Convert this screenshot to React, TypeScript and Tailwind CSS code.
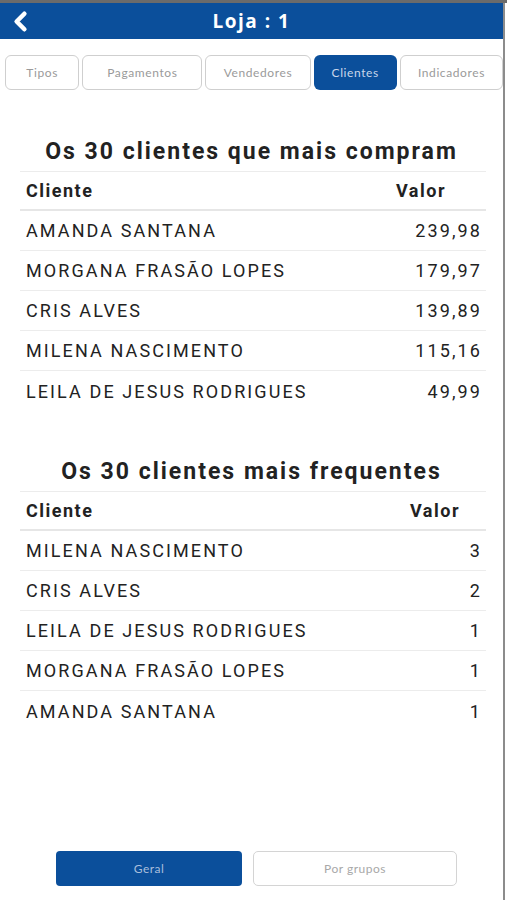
import { ChevronLeft } from "lucide-react"

const blue = "bg-[#0b4f9b]"

const tabs = ["Tipos", "Pagamentos", "Vendedores", "Clientes", "Indicadores"]
const tabWidths = ["w-[75px]", "w-[121px]", "w-[106px]", "w-[84px]", "w-[104px]"]

const topBuyers = [
  { name: "AMANDA SANTANA", value: "239,98" },
  { name: "MORGANA FRASÃO LOPES", value: "179,97" },
  { name: "CRIS ALVES", value: "139,89" },
  { name: "MILENA NASCIMENTO", value: "115,16" },
  { name: "LEILA DE JESUS RODRIGUES", value: "49,99" },
]

const frequent = [
  { name: "MILENA NASCIMENTO", value: "3" },
  { name: "CRIS ALVES", value: "2" },
  { name: "LEILA DE JESUS RODRIGUES", value: "1" },
  { name: "MORGANA FRASÃO LOPES", value: "1" },
  { name: "AMANDA SANTANA", value: "1" },
]

function RankTable({
  title,
  rows,
  headerPad,
}: {
  title: string
  rows: { name: string; value: string }[]
  headerPad: string
}) {
  return (
    <section className="flex flex-col">
      <h2 className="text-center text-[23px] font-bold text-[#222] leading-[28px] tracking-[2px] pb-[5px]">{title}</h2>
      <div className="ml-[20px] mr-[17px] border-t border-[#ececec]">
        <div className="flex items-center justify-between h-[39px] border-b-2 border-[#e6e6e6] px-[6px] text-[18px] font-bold tracking-[1.5px] text-[#222]">
          <span>Cliente</span>
          <span className={headerPad}>Valor</span>
        </div>
        {rows.map((r, i) => (
          <div
            key={r.name}
            className={`flex items-center justify-between h-[40px] px-[6px] text-[18px] tracking-[2.1px] text-[#222] ${
              i < rows.length - 1 ? "border-b border-[#ececec]" : ""
            }`}
          >
            <span>{r.name}</span>
            <span className="-mr-[2px]">{r.value}</span>
          </div>
        ))}
      </div>
    </section>
  )
}

export default function App() {
  return (
    <div className="w-[507px] h-[900px] bg-white font-['Roboto',sans-serif] flex flex-col">
      <div className="h-[3px] bg-[#6b6b6b]" />
      <div className="flex-1 w-[505px] border-r-2 border-[#8c8c8c] flex flex-col">
        <header className={`${blue} h-[36px] relative flex items-center justify-center`}>
          <ChevronLeft className="absolute left-[5px] top-[3px] text-white" size={31} strokeWidth={3.5} />
          <h1 className="text-white text-[19px] font-bold font-['Open_Sans',sans-serif] tracking-[1.5px]">Loja : 1</h1>
        </header>

        <nav className="flex gap-[3px] pl-[5px] pt-[16px]">
          {tabs.map((t, i) => {
            const active = t === "Clientes"
            return (
              <div
                key={t}
                className={`${tabWidths[i]} h-[35px] rounded-[6px] flex items-center justify-center text-[12px] tracking-[0.6px] font-['Lato',sans-serif] ${
                  active ? `${blue} text-[#c9d6ea]` : "border border-[#cfcfcf] text-[#9a9a9a]"
                }`}
              >
                {t}
              </div>
            )
          })}
        </nav>

        <div className="pt-[48px]">
          <RankTable title="Os 30 clientes que mais compram" rows={topBuyers} headerPad="pr-[34px]" />
        </div>
        <div className="pt-[47px]">
          <RankTable title="Os 30 clientes mais frequentes" rows={frequent} headerPad="pr-[20px]" />
        </div>

        <div className="mt-auto mb-[14px] flex gap-[11px] pl-[56px]">
          <button className={`${blue} w-[186px] h-[35px] rounded-[4px] text-[12px] tracking-[0.5px] text-[#a9bedb] font-['Lato',sans-serif]`}>
            Geral
          </button>
          <button className="w-[204px] h-[35px] rounded-[5px] border border-[#d4d4d4] text-[12px] tracking-[0.5px] text-[#a8a8a8] font-['Lato',sans-serif]">
            Por grupos
          </button>
        </div>
      </div>
    </div>
  )
}
